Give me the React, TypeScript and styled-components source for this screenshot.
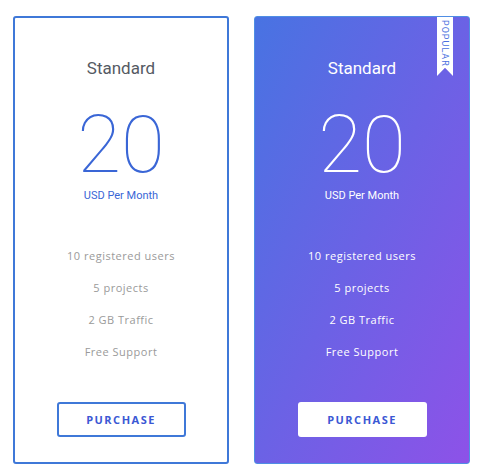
import styled, { createGlobalStyle } from "styled-components";

const GlobalStyle = createGlobalStyle`
  body {
    margin: 0;
    background: #ffffff;
    font-family: Roboto, "Liberation Sans", sans-serif;
  }
`;

const Page = styled.div`
  display: flex;
  gap: 25px;
  padding: 16px 0 0 13px;
`;

const Card = styled.div<{ $featured?: boolean }>`
  position: relative;
  box-sizing: border-box;
  width: 216px;
  height: 448px;
  border-radius: 3px;
  border: ${(p) => (p.$featured ? "1px solid #4f8ee4" : "2px solid #3f78d8")};
  background: ${(p) =>
    p.$featured
      ? "linear-gradient(to bottom right, #4873e2 0%, #6b62e5 50%, #8d52e8 100%)"
      : "#ffffff"};
  display: flex;
  flex-direction: column;
  align-items: center;
  padding-top: ${(p) => (p.$featured ? "39px" : "38px")};
  color: ${(p) => (p.$featured ? "#ffffff" : "#555a63")};
`;

const Title = styled.div`
  font-size: 17px;
  line-height: 24px;
  font-weight: 400;
`;

const Price = styled.div<{ $featured?: boolean }>`
  margin-top: 35px;
  font-size: 80px;
  line-height: 60px;
  font-weight: 100;
  color: ${(p) => (p.$featured ? "#ffffff" : "#3a66d6")};
`;

const Period = styled.div<{ $featured?: boolean }>`
  margin-top: 14px;
  font-size: 11px;
  line-height: 14px;
  color: ${(p) => (p.$featured ? "#ffffff" : "#3a66d6")};
`;

const Features = styled.ul<{ $featured?: boolean }>`
  list-style: none;
  margin: 37px 0 0;
  padding: 0;
  text-align: center;
  font-family: "Open Sans", sans-serif;
  font-size: 11px;
  letter-spacing: 0.5px;
  color: ${(p) => (p.$featured ? "#ffffff" : "#9a9a9a")};
`;

const Feature = styled.li`
  line-height: 32px;
`;

const PurchaseButton = styled.button<{ $featured?: boolean }>`
  margin-top: 34px;
  box-sizing: border-box;
  width: 129px;
  height: 35px;
  border-radius: 3px;
  border: ${(p) => (p.$featured ? "none" : "2px solid #3f78d8")};
  background: #ffffff;
  color: #3b58d4;
  font-family: "Open Sans", sans-serif;
  font-size: 11px;
  font-weight: 700;
  letter-spacing: 1.5px;
  cursor: pointer;
`;

const Ribbon = styled.div`
  position: absolute;
  top: 0;
  right: 16px;
  width: 16px;
  height: 59px;
  background: #ffffff;
  clip-path: polygon(0 0, 100% 0, 100% 100%, 50% 86%, 0 100%);
  display: flex;
  justify-content: center;
  padding-top: 3px;
  box-sizing: border-box;
`;

const RibbonText = styled.span`
  writing-mode: vertical-rl;
  font-family: Roboto, sans-serif;
  font-size: 9px;
  letter-spacing: 1px;
  color: #4a6fe0;
`;

const features = [
  "10 registered users",
  "5 projects",
  "2 GB Traffic",
  "Free Support",
];

function PlanCard({ featured }: { featured?: boolean }) {
  return (
    <Card $featured={featured}>
      {featured && (
        <Ribbon>
          <RibbonText>POPULAR</RibbonText>
        </Ribbon>
      )}
      <Title>Standard</Title>
      <Price $featured={featured}>20</Price>
      <Period $featured={featured}>USD Per Month</Period>
      <Features $featured={featured}>
        {features.map((f) => (
          <Feature key={f}>{f}</Feature>
        ))}
      </Features>
      <PurchaseButton $featured={featured}>PURCHASE</PurchaseButton>
    </Card>
  );
}

export default function App() {
  return (
    <>
      <GlobalStyle />
      <Page>
        <PlanCard />
        <PlanCard featured />
      </Page>
    </>
  );
}
